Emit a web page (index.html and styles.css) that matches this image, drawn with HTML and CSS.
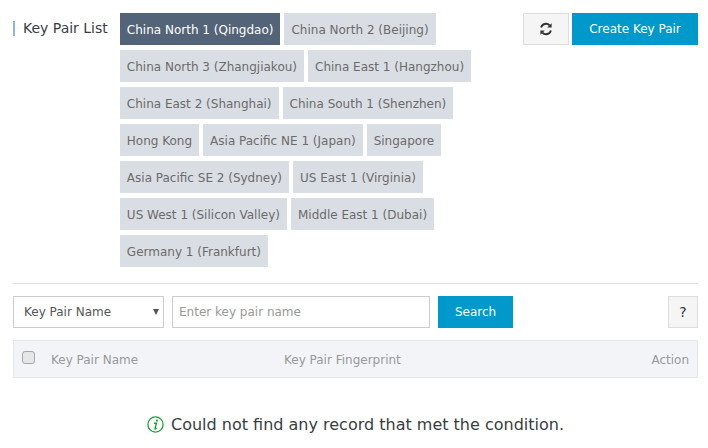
FILE: index.html
```html
<!DOCTYPE html>
<html lang="en">
<head>
<meta charset="utf-8">
<title>Key Pair List</title>
<link rel="stylesheet" href="styles.css">
</head>
<body>
<div class="page">
  <header class="head">
    <h1 class="title">Key Pair List</h1>
    <div class="tags">
      <a class="tag active">China North 1 (Qingdao)</a>
      <a class="tag">China North 2 (Beijing)</a>
      <a class="tag">China North 3 (Zhangjiakou)</a>
      <a class="tag">China East 1 (Hangzhou)</a>
      <a class="tag">China East 2 (Shanghai)</a>
      <a class="tag">China South 1 (Shenzhen)</a>
      <a class="tag">Hong Kong</a>
      <a class="tag">Asia Pacific NE 1 (Japan)</a>
      <a class="tag">Singapore</a>
      <a class="tag">Asia Pacific SE 2 (Sydney)</a>
      <a class="tag">US East 1 (Virginia)</a>
      <a class="tag">US West 1 (Silicon Valley)</a>
      <a class="tag">Middle East 1 (Dubai)</a>
      <a class="tag">Germany 1 (Frankfurt)</a>
    </div>
    <div class="actions">
      <button class="btn-icon" aria-label="Refresh">
        <svg width="14" height="14" viewBox="0 0 14 14" fill="none" stroke="#333" stroke-width="1.9">
          <path d="M2.1 5.6A5 5 0 0 1 10.6 3.4"/>
          <path d="M11.9 8.4A5 5 0 0 1 3.4 10.6"/>
          <path d="M12.6 1.2V5.6H8.2z" fill="#333" stroke="none"/>
          <path d="M1.4 12.8V8.4h4.4z" fill="#333" stroke="none"/>
        </svg>
      </button>
      <button class="btn-primary create">Create Key Pair</button>
    </div>
  </header>

  <div class="filters">
    <div class="select-wrap">
      <select class="select"><option>Key Pair Name</option></select>
    </div>
    <input class="input" type="text" placeholder="Enter key pair name">
    <button class="btn-primary search">Search</button>
    <button class="btn-help">?</button>
  </div>

  <div class="thead">
    <input class="check" type="checkbox">
    <span class="col-name">Key Pair Name</span>
    <span class="col-finger">Key Pair Fingerprint</span>
    <span class="col-action">Action</span>
  </div>

  <p class="empty">
    <svg class="info" width="17" height="17" viewBox="0 0 17 17" fill="none">
      <circle cx="8.5" cy="8.5" r="7.6" stroke="#12a52f" stroke-width="1.3"/>
      <circle cx="9.9" cy="4.6" r="1.1" fill="#12a52f"/>
      <path d="M7 7.3H9.5L8 12.4q-.1.7.6.5l1.1-.6" stroke="#12a52f" stroke-width="1.4"/>
    </svg>
    Could not find any record that met the condition.
  </p>
</div>
</body>
</html>
```

FILE: styles.css
```css
* { box-sizing: border-box; }
html, body { margin: 0; padding: 0; background: #fff; }
body { font-family: "DejaVu Sans", sans-serif; font-size: 12px; color: #333; }
.page { padding: 13px 10px 0 13px; }

.head {
  display: flex;
  align-items: flex-start;
  padding-bottom: 16px;
  border-bottom: 1px solid #dddddd;
}
.title {
  flex: none;
  width: 106.85px;
  margin: 8px 0 0;
  padding-left: 8px;
  border-left: 2px solid #88b7e0;
  font-size: 14px;
  font-weight: 400;
  line-height: 15px;
  color: #373d41;
}
.tags {
  flex: 1;
  display: flex;
  flex-wrap: wrap;
  gap: 5px 4px;
}
.tag {
  height: 32px;
  padding: 1px 7px 0;
  line-height: 32px;
  background: #d9dee4;
  color: #6b6b6b;
  white-space: nowrap;
}
.tag.active { background: #546478; color: #fff; }
.actions { flex: none; display: flex; gap: 3px; }

button { font-family: inherit; font-size: 12px; cursor: pointer; }
.btn-icon {
  width: 46px;
  height: 32px;
  display: flex;
  align-items: center;
  justify-content: center;
  padding: 0;
  background: #f5f5f5;
  border: 1px solid #dddddd;
}
.btn-primary {
  height: 32px;
  padding: 0;
  border: 0;
  background: #0099cc;
  color: #fff;
}
.create { width: 126px; }

.filters {
  display: flex;
  align-items: flex-start;
  margin-top: 12px;
}
.select-wrap { position: relative; width: 151px; height: 32px; flex: none; }
.select-wrap::after {
  content: "";
  position: absolute;
  right: 5px;
  top: 13px;
  border-style: solid;
  border-width: 6px 3px 0;
  border-color: #555 transparent transparent;
  pointer-events: none;
}
.select {
  appearance: none;
  display: block;
  width: 100%;
  height: 32px;
  padding: 0 10px;
  border: 1px solid #cccccc;
  border-radius: 0;
  background-color: #fff;
  color: #555;
  font: 12px "DejaVu Sans", sans-serif;
}
.input {
  width: 258px;
  height: 32px;
  margin-left: 8px;
  padding: 0 6px;
  border: 1px solid #cccccc;
  border-radius: 0;
  outline: 0;
  font: 12px "DejaVu Sans", sans-serif;
  color: #555;
}
.input::placeholder { color: #999; opacity: 1; }
.search { width: 75px; margin-left: 8px; }
.btn-help {
  width: 30px;
  height: 32px;
  margin-left: auto;
  padding: 0;
  background: #f5f5f5;
  border: 1px solid #dddddd;
  color: #333;
  font-size: 14px;
  font-weight: 400;
}

.thead {
  display: flex;
  align-items: center;
  height: 38px;
  margin-top: 12px;
  padding-top: 2px;
  background: #f3f4f8;
  border: 1px solid #e3e6ea;
  color: #999;
}
.check {
  appearance: none;
  flex: none;
  width: 13px;
  height: 13px;
  margin: -6px 0 0 8px;
  background: #e6e6e6;
  border: 1px solid #a8a8a8;
  border-radius: 3px;
}
.col-name { margin-left: 16px; width: 233px; }
.col-finger { flex: 1; }
.col-action { margin-right: 8px; }

.empty {
  display: flex;
  align-items: center;
  justify-content: center;
  gap: 7px;
  margin: 37px 0 0;
  font-size: 16px;
  line-height: 20px;
  color: #373d41;
}
.info { flex: none; margin-top: -1px; }
```
